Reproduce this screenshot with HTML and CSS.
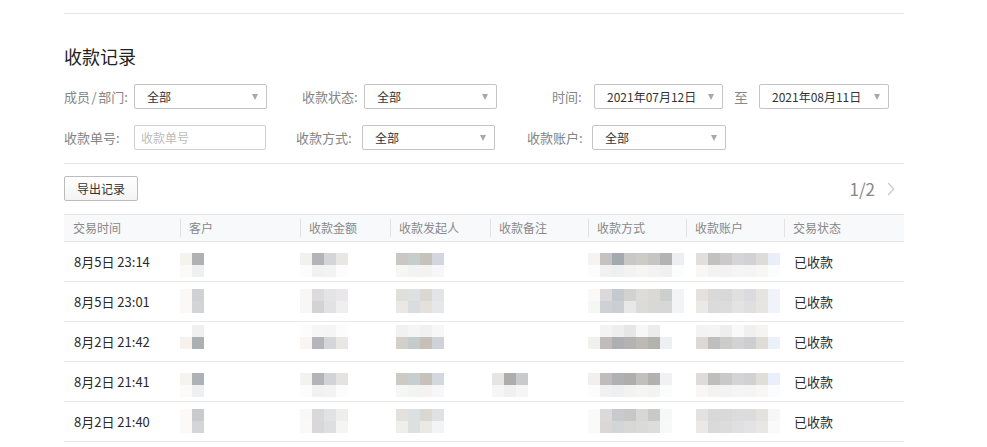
FILE: index.html
```html
<!DOCTYPE html>
<html lang="zh-CN">
<head>
<meta charset="utf-8">
<title>收款记录</title>
<link rel="stylesheet" href="styles.css">
</head>
<body>
<div class="page">
  <div class="hline"></div>
  <h2 class="title">收款记录</h2>

  <div class="filters">
    <div class="frow">
      <div class="field"><span class="lbl w70">成员<span class="sl">/</span>部门:</span><div class="sel w133"><span>全部</span><i class="tri"></i></div></div>
      <div class="field m35"><span class="lbl w62">收款状态:</span><div class="sel w133"><span>全部</span><i class="tri"></i></div></div>
      <div class="field m55"><span class="lbl w42">时间:</span><div class="sel w129"><span>2021年07月12日</span><i class="tri"></i></div><span class="to">至</span><div class="sel w130"><span>2021年08月11日</span><i class="tri"></i></div></div>
    </div>
    <div class="frow">
      <div class="field"><span class="lbl w70">收款单号:</span><div class="inp"><span class="ph">收款单号</span></div></div>
      <div class="field m30"><span class="lbl w66">收款方式:</span><div class="sel w133"><span>全部</span><i class="tri"></i></div></div>
      <div class="field m32"><span class="lbl w65">收款账户:</span><div class="sel w134"><span>全部</span><i class="tri"></i></div></div>
    </div>
  </div>

  <div class="hline sep"></div>

  <div class="toolbar">
    <button class="btn">导出记录</button>
    <div class="pager"><span class="pg">1/2</span><svg class="chev" width="8" height="14" viewBox="0 0 8 14"><path d="M1.2 1 L6.8 7 L1.2 13" fill="none" stroke="#c8c8c8" stroke-width="1.2"/></svg></div>
  </div>

  <div class="table">
    <div class="thead">
      <div class="th">交易时间</div>
      <div class="th s">客户</div>
      <div class="th s">收款金额</div>
      <div class="th s">收款发起人</div>
      <div class="th s">收款备注</div>
      <div class="th s">收款方式</div>
      <div class="th s">收款账户</div>
      <div class="th s">交易状态</div>
    </div>

    <div class="tr o12">
      <div class="td">8月5日 23:14</div>
      <div class="td"><div class="mosaic c-cli"><div class="mr"><span style="background:#f6f2ee"></span><span style="background:#aeb2b5"></span></div><div class="mr"><span style="background:#fbfaf9"></span><span style="background:#eeeff0"></span></div></div></div>
      <div class="td"><div class="mosaic c-amt"><div class="mr"><span style="background:#f3f1ee"></span><span style="background:#b3b3b8"></span><span style="background:#d3d5d8"></span><span style="background:#e8e7e3"></span></div><div class="mr"><span style="background:#fcfcfc"></span><span style="background:#f1f1f2"></span><span style="background:#f3f3f4"></span><span style="background:#fcfcfc"></span></div></div></div>
      <div class="td"><div class="mosaic c-ini"><div class="mr"><span style="background:#cbc8c4"></span><span style="background:#c5cdcd"></span><span style="background:#c6c1bb"></span><span style="background:#d3d6de"></span></div><div class="mr"><span style="background:#f6f6f5"></span><span style="background:#f2f4f4"></span><span style="background:#f4f3f2"></span><span style="background:#f7f7f9"></span></div></div></div>
      <div class="td"></div>
      <div class="td"><div class="mosaic c-met"><div class="mr"><span style="background:#f6f3f1"></span><span style="background:#c4c3c3"></span><span style="background:#a3a9af"></span><span style="background:#c9c8c6"></span><span style="background:#cdcbc5"></span><span style="background:#c6c5c3"></span><span style="background:#b3b3b3"></span><span style="background:#eceff2"></span></div><div class="mr"><span style="background:#fdfcfc"></span><span style="background:#f1f1f1"></span><span style="background:#eeeff0"></span><span style="background:#f3f3f3"></span><span style="background:#f5f5f4"></span><span style="background:#f3f3f3"></span><span style="background:#f0f0f0"></span><span style="background:#fbfcfc"></span></div></div></div>
      <div class="td"><div class="mosaic c-acc"><div class="mr"><span style="background:#e1dedb"></span><span style="background:#c2c1bf"></span><span style="background:#cbcac9"></span><span style="background:#d5d4d6"></span><span style="background:#d1d2d6"></span><span style="background:#dedcd9"></span><span style="background:#eaeef8"></span></div><div class="mr"><span style="background:#f8f7f6"></span><span style="background:#f2f2f2"></span><span style="background:#f3f3f3"></span><span style="background:#f5f5f6"></span><span style="background:#f4f4f5"></span><span style="background:#f8f7f6"></span><span style="background:#fbfcfe"></span></div></div></div>
      <div class="td">已收款</div>
    </div>

    <div class="tr o8">
      <div class="td">8月5日 23:01</div>
      <div class="td"><div class="mosaic c-cli"><div class="mr"><span style="background:#fbf8f5"></span><span style="background:#cfd1d4"></span></div><div class="mr"><span style="background:#fbf8f5"></span><span style="background:#d2d4d7"></span></div></div></div>
      <div class="td"><div class="mosaic c-amt"><div class="mr"><span style="background:#f8f7f5"></span><span style="background:#dcdadd"></span><span style="background:#e4e4e7"></span><span style="background:#e9e7e9"></span></div><div class="mr"><span style="background:#f8f7f5"></span><span style="background:#d3d3d6"></span><span style="background:#e2e2e4"></span><span style="background:#efeff0"></span></div></div></div>
      <div class="td"><div class="mosaic c-ini"><div class="mr"><span style="background:#e0dfda"></span><span style="background:#dde1e1"></span><span style="background:#dbd8d4"></span><span style="background:#e2e4e8"></span></div><div class="mr"><span style="background:#e9e8e4"></span><span style="background:#d9dddd"></span><span style="background:#e4e1dd"></span><span style="background:#e6e7ea"></span></div></div></div>
      <div class="td"></div>
      <div class="td"><div class="mosaic c-met"><div class="mr"><span style="background:#faf9f8"></span><span style="background:#dbd9d9"></span><span style="background:#c4c9cd"></span><span style="background:#d2d2d0"></span><span style="background:#dedcd8"></span><span style="background:#dad9d6"></span><span style="background:#cdcfcf"></span><span style="background:#f3f4f5"></span></div><div class="mr"><span style="background:#f6f6f4"></span><span style="background:#cfd2d4"></span><span style="background:#cbced2"></span><span style="background:#e8e8e8"></span><span style="background:#dcdbd8"></span><span style="background:#d8d8d6"></span><span style="background:#d6d7d6"></span><span style="background:#f3f4f5"></span></div></div></div>
      <div class="td"><div class="mosaic c-acc"><div class="mr"><span style="background:#e4e1df"></span><span style="background:#dad9d9"></span><span style="background:#d9d8d9"></span><span style="background:#e1e0e1"></span><span style="background:#dbdadd"></span><span style="background:#e6e4e1"></span><span style="background:#f0f4fa"></span></div><div class="mr"><span style="background:#ebe9e6"></span><span style="background:#dcdbdb"></span><span style="background:#dddcdc"></span><span style="background:#e3e3e4"></span><span style="background:#dfdfe1"></span><span style="background:#e6e5e2"></span><span style="background:#f0f4fa"></span></div></div></div>
      <div class="td">已收款</div>
    </div>

    <div class="tr o4">
      <div class="td">8月2日 21:42</div>
      <div class="td"><div class="mosaic c-cli"><div class="mr"><span style="background:#ffffff"></span><span style="background:#f0f0f1"></span></div><div class="mr"><span style="background:#f6f1ec"></span><span style="background:#abb0b3"></span></div></div></div>
      <div class="td"><div class="mosaic c-amt"><div class="mr"><span style="background:#fcfcfc"></span><span style="background:#f6f6f7"></span><span style="background:#f5f5f6"></span><span style="background:#fcfcfc"></span></div><div class="mr"><span style="background:#f8f5f2"></span><span style="background:#b6b5bc"></span><span style="background:#d5d6da"></span><span style="background:#e8e7e3"></span></div></div></div>
      <div class="td"><div class="mosaic c-ini"><div class="mr"><span style="background:#f1f1f0"></span><span style="background:#f3f5f7"></span><span style="background:#f1f1f1"></span><span style="background:#f7f7f7"></span></div><div class="mr"><span style="background:#d2d0c9"></span><span style="background:#c3cbcb"></span><span style="background:#c7c0b9"></span><span style="background:#cfd2d6"></span></div></div></div>
      <div class="td"></div>
      <div class="td"><div class="mosaic c-met"><div class="mr"><span style="background:#ffffff"></span><span style="background:#f3f3f3"></span><span style="background:#eeeeef"></span><span style="background:#e6e6e6"></span><span style="background:#f7f7f7"></span><span style="background:#ececec"></span><span style="background:#ffffff"></span><span style="background:#ffffff"></span></div><div class="mr"><span style="background:#f0f0ec"></span><span style="background:#c1bcbb"></span><span style="background:#acb0b0"></span><span style="background:#b4b2b2"></span><span style="background:#bdbab6"></span><span style="background:#b2b3af"></span><span style="background:#edf0f3"></span><span style="background:#ffffff"></span></div></div></div>
      <div class="td"><div class="mosaic c-acc"><div class="mr"><span style="background:#f4f3f2"></span><span style="background:#f4f4f4"></span><span style="background:#eeeeee"></span><span style="background:#f9f9f9"></span><span style="background:#f0f0f0"></span><span style="background:#f5f4f2"></span><span style="background:#ffffff"></span></div><div class="mr"><span style="background:#dcd8d5"></span><span style="background:#bfbfbf"></span><span style="background:#cccccb"></span><span style="background:#d3d3d4"></span><span style="background:#ceced1"></span><span style="background:#dfdcd7"></span><span style="background:#eaf1fb"></span></div></div></div>
      <div class="td">已收款</div>
    </div>

    <div class="tr o12">
      <div class="td">8月2日 21:41</div>
      <div class="td"><div class="mosaic c-cli"><div class="mr"><span style="background:#f7f3ee"></span><span style="background:#acb2b5"></span></div><div class="mr"><span style="background:#fcfbfa"></span><span style="background:#eeeff0"></span></div></div></div>
      <div class="td"><div class="mosaic c-amt"><div class="mr"><span style="background:#f4f2ee"></span><span style="background:#b3b3ba"></span><span style="background:#d2d3d6"></span><span style="background:#e4e3e2"></span></div><div class="mr"><span style="background:#fcfcfc"></span><span style="background:#f1f1f2"></span><span style="background:#f3f3f4"></span><span style="background:#fcfcfc"></span></div></div></div>
      <div class="td"><div class="mosaic c-ini"><div class="mr"><span style="background:#cdc9c3"></span><span style="background:#c6cecf"></span><span style="background:#c8c1b9"></span><span style="background:#d3d7de"></span></div><div class="mr"><span style="background:#f6f6f5"></span><span style="background:#f2f4f4"></span><span style="background:#f4f3f2"></span><span style="background:#f7f7f9"></span></div></div></div>
      <div class="td"><div class="mosaic c-rem"><div class="mr"><span style="background:#e7e5e1"></span><span style="background:#aeadab"></span><span style="background:#c7cbcd"></span></div><div class="mr"><span style="background:#f6f6f6"></span><span style="background:#f0f0f0"></span><span style="background:#f5f5f5"></span></div></div></div>
      <div class="td"><div class="mosaic c-met"><div class="mr"><span style="background:#f1f0ec"></span><span style="background:#c1bcbb"></span><span style="background:#aeb2b4"></span><span style="background:#b0aead"></span><span style="background:#c3bfbb"></span><span style="background:#b3b1af"></span><span style="background:#eff1f4"></span><span style="background:#ffffff"></span></div><div class="mr"><span style="background:#fdfcfc"></span><span style="background:#f1f1f1"></span><span style="background:#eeeff0"></span><span style="background:#f3f3f3"></span><span style="background:#f5f5f4"></span><span style="background:#f3f3f3"></span><span style="background:#fbfcfc"></span><span style="background:#ffffff"></span></div></div></div>
      <div class="td"><div class="mosaic c-acc"><div class="mr"><span style="background:#dedbd8"></span><span style="background:#bfbebd"></span><span style="background:#c9c9c8"></span><span style="background:#d4d4d6"></span><span style="background:#d1d1d4"></span><span style="background:#e1ddd7"></span><span style="background:#eaf0fb"></span></div><div class="mr"><span style="background:#f8f7f6"></span><span style="background:#f2f2f2"></span><span style="background:#f3f3f3"></span><span style="background:#f5f5f6"></span><span style="background:#f4f4f5"></span><span style="background:#f8f7f6"></span><span style="background:#fbfcfe"></span></div></div></div>
      <div class="td">已收款</div>
    </div>

    <div class="tr o8">
      <div class="td">8月2日 21:40</div>
      <div class="td"><div class="mosaic c-cli"><div class="mr"><span style="background:#fcf9f6"></span><span style="background:#c8cacd"></span></div><div class="mr"><span style="background:#fcf9f6"></span><span style="background:#d3d5d8"></span></div></div></div>
      <div class="td"><div class="mosaic c-amt"><div class="mr"><span style="background:#f9f8f7"></span><span style="background:#d9d9dc"></span><span style="background:#e1e2e4"></span><span style="background:#efeeed"></span></div><div class="mr"><span style="background:#f9f9f8"></span><span style="background:#d8d8da"></span><span style="background:#dfdfe1"></span><span style="background:#f5f5f4"></span></div></div></div>
      <div class="td"><div class="mosaic c-ini"><div class="mr"><span style="background:#e2e1dc"></span><span style="background:#dde0e1"></span><span style="background:#dbd8d4"></span><span style="background:#e0e1e5"></span></div><div class="mr"><span style="background:#efeeea"></span><span style="background:#dce0e0"></span><span style="background:#ebe9e6"></span><span style="background:#f4f4f6"></span></div></div></div>
      <div class="td"></div>
      <div class="td"><div class="mosaic c-met"><div class="mr"><span style="background:#fafafa"></span><span style="background:#dcd9d9"></span><span style="background:#c9cacd"></span><span style="background:#c8c7c7"></span><span style="background:#d7d7d5"></span><span style="background:#c9c9c8"></span><span style="background:#f6f7f9"></span><span style="background:#ffffff"></span></div><div class="mr"><span style="background:#fafaf9"></span><span style="background:#dad7d7"></span><span style="background:#d3d6d7"></span><span style="background:#d8d8d6"></span><span style="background:#dadad8"></span><span style="background:#dddddb"></span><span style="background:#f7f8f8"></span><span style="background:#ffffff"></span></div></div></div>
      <div class="td"><div class="mosaic c-acc"><div class="mr"><span style="background:#e4e1de"></span><span style="background:#d8d8d8"></span><span style="background:#dad9d9"></span><span style="background:#dcdcdd"></span><span style="background:#dcdcdf"></span><span style="background:#e4e2df"></span><span style="background:#f7f7f7"></span></div><div class="mr"><span style="background:#ebe9e7"></span><span style="background:#dadada"></span><span style="background:#dcdcdc"></span><span style="background:#e0e0e0"></span><span style="background:#e3e3e4"></span><span style="background:#e8e7e4"></span><span style="background:#fafafa"></span></div></div></div>
      <div class="td">已收款</div>
    </div>
  </div>
</div>
</body>
</html>
```

FILE: styles.css
```css
* { box-sizing: border-box; }
html, body { margin: 0; padding: 0; background: #fff; }
body {
  font-family: "Noto Sans CJK SC", "Noto Sans", sans-serif;
  color: #333;
}
.page {
  width: 840px;
  margin-left: 64px;
  padding-top: 13px;
}
.hline { height: 1px; background: #e6e6e6; }
.title {
  margin: 30px 0 0;
  font-size: 18px;
  line-height: 24px;
  font-weight: normal;
  color: #222;
}
.filters {
  margin-top: 16px;
  display: flex;
  flex-direction: column;
  gap: 16px;
}
.frow { display: flex; align-items: center; height: 25px; }
.field { display: flex; align-items: center; }
.m30 { margin-left: 30px; }
.m32 { margin-left: 32px; }
.m35 { margin-left: 35px; }
.m55 { margin-left: 55px; }
.lbl {
  font-size: 13px;
  line-height: 25px;
  color: #858585;
  white-space: nowrap;
}
.sl { margin: 0 1.5px; }
.w42 { width: 42px; }
.w62 { width: 62px; }
.w65 { width: 65px; }
.w66 { width: 66px; }
.w70 { width: 70px; }
.sel {
  height: 25px;
  border: 1px solid #c4c4c4;
  border-radius: 2px;
  background: #fff;
  padding: 0 8px 0 12px;
  display: flex;
  align-items: center;
  justify-content: space-between;
  font-size: 12px;
  color: #333;
  white-space: nowrap;
}
.w129 { width: 129px; }
.w130 { width: 130px; }
.w133 { width: 133px; }
.w134 { width: 134px; }
.tri {
  width: 0; height: 0;
  border-left: 3.5px solid transparent;
  border-right: 3.5px solid transparent;
  border-top: 6px solid #a8a8a8;
}
.to {
  margin: 0 11px 0 11px;
  font-size: 14px;
  color: #888;
}
.inp {
  width: 132px;
  height: 25px;
  border: 1px solid #d0d0d0;
  border-radius: 2px;
  padding-left: 6px;
  display: flex;
  align-items: center;
  font-size: 12px;
}
.ph { color: #bbb; }
.sep { margin-top: 13px; }
.toolbar {
  margin-top: 12px;
  height: 25px;
  display: flex;
  align-items: center;
  justify-content: space-between;
}
.btn {
  width: 74px;
  height: 25px;
  border: 1px solid #bcbcbc;
  border-radius: 2px;
  background: linear-gradient(#ffffff, #f4f4f4);
  font-family: inherit;
  font-size: 12px;
  color: #333;
  padding: 0;
}
.pager {
  display: flex;
  align-items: center;
  margin-right: 9px;
}
.pg { font-size: 17px; color: #888; }
.chev { margin-left: 12px; display: block; }
.table { margin-top: 13px; }
.thead, .tr {
  display: grid;
  grid-template-columns: 116px 120px 90px 100px 98px 98px 98px 120px;
}
.thead {
  height: 28px;
  border-top: 1px solid #e6e6e6;
  border-bottom: 1px solid #e6e6e6;
  background: #f8f9fb;
}
.th {
  position: relative;
  padding-left: 9px;
  font-size: 12px;
  line-height: 26px;
  color: #888;
}
.th.s::before {
  content: "";
  position: absolute;
  left: 0;
  top: 4px;
  height: 18px;
  width: 1px;
  background: #e2e2e2;
}
.tr {
  height: 40px;
  border-bottom: 1px solid #e8e8e8;
}
.td {
  padding-left: 10px;
  font-size: 13px;
  line-height: 39px;
  color: #2a2a2a;
  white-space: nowrap;
}
.td:has(.mosaic), .td:empty { padding-left: 0; }
.mosaic { display: flex; flex-direction: column; }
.mr { display: flex; }
.mr span { display: block; width: 12px; height: 12px; }
.o12 .mosaic { margin-top: 11px; }
.o8 .mosaic { margin-top: 7px; }
.o4 .mosaic { margin-top: 3px; }
.c-cli, .c-amt, .c-met { margin-left: 0; }
.c-ini { margin-left: 6px; }
.c-rem { margin-left: 2px; }
.c-acc { margin-left: 10px; }
```
